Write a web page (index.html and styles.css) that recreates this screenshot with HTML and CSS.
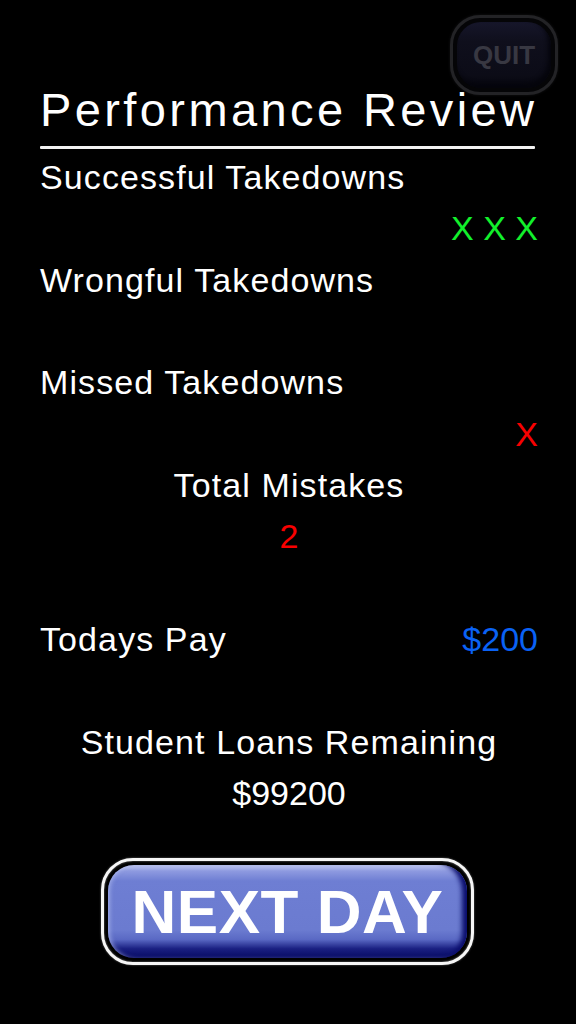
FILE: index.html
```html
<!DOCTYPE html>
<html lang="en">
<head>
<meta charset="utf-8">
<title>Performance Review</title>
<link rel="stylesheet" href="styles.css">
</head>
<body>
<div class="screen">
  <div class="quit-btn"><div class="quit-face">QUIT</div></div>
  <h1 class="title">Performance Review</h1>
  <div class="rule"></div>
  <div class="stats">
    <div class="row">Successful Takedowns</div>
    <div class="row right num green">X X X</div>
    <div class="row">Wrongful Takedowns</div>
    <div class="row right"></div>
    <div class="row">Missed Takedowns</div>
    <div class="row right num red">X</div>
    <div class="row center">Total Mistakes</div>
    <div class="row center num red">2</div>
    <div class="row"></div>
    <div class="row split"><span>Todays Pay</span><span class="num blue">$200</span></div>
    <div class="row"></div>
    <div class="row center">Student Loans Remaining</div>
    <div class="row center num">$99200</div>
  </div>
  <div class="next-wrap">
    <div class="next-btn"><div class="next-face">NEXT DAY</div></div>
  </div>
</div>
</body>
</html>
```
FILE: styles.css
```css
html, body {
  margin: 0;
  padding: 0;
  background: #000;
}
body {
  font-family: "Liberation Sans", Arial, Helvetica, sans-serif;
  color: #fff;
}
.screen {
  position: relative;
  width: 576px;
  height: 1024px;
  box-sizing: border-box;
  padding: 85px 38px 0 40px;
}
.quit-btn {
  position: absolute;
  top: 15px;
  left: 450px;
  width: 108px;
  height: 80px;
  box-sizing: border-box;
  border: 3px solid #232326;
  border-radius: 30px;
  padding: 4px;
  background: #050507;
  box-shadow: 0 0 3px #141416;
}
.quit-face {
  height: 100%;
  border-radius: 24px;
  background: linear-gradient(#16162a 0, #0f0f1c 30%, #0c0c17 80%, #06060e 100%);
  box-shadow: inset -3px -4px 4px #05050c;
  display: flex;
  align-items: center;
  justify-content: center;
  color: #383842;
  font-size: 26px;
  font-weight: bold;
}
.title {
  margin: 0;
  font-size: 47px;
  font-weight: normal;
  line-height: 50px;
  letter-spacing: 3.4px;
}
.rule {
  margin-top: 11px;
  width: 495px;
  height: 3px;
  background: #f2f2f2;
  border-radius: 1px;
}
.stats {
  margin-top: 3px;
  font-size: 34px;
  letter-spacing: 1.1px;
}
.row {
  height: 51.35px;
  line-height: 51.35px;
  white-space: nowrap;
}
.num { letter-spacing: 0; }
.right { text-align: right; }
.center { text-align: center; }
.split {
  display: flex;
  justify-content: space-between;
}
.green { color: #12f02c; }
.red { color: #f80000; }
.blue { color: #0a62f5; }
.next-wrap {
  margin-top: 39px;
  display: flex;
  justify-content: center;
}
.next-btn {
  margin-right: 3px;
  width: 373px;
  height: 107px;
  box-sizing: border-box;
  border: 3px solid #f6f6f6;
  border-radius: 32px;
  padding: 4px;
  background: #000;
  box-shadow: 0 0 2px #777, inset 0 0 2px #888;
}
.next-face {
  height: 100%;
  border-radius: 26px;
  background: linear-gradient(#c4ccf4 0, #8e9ae0 6px, #6e7ed3 16px, #6b7bd0 70%, #5a69c4 80%, #1a2082 90%, #070a62 100%);
  box-shadow: inset -8px 0 5px -3px #0a0d6c, inset 3px 0 4px -1px rgba(200, 210, 250, 0.5);
  display: flex;
  align-items: center;
  justify-content: center;
  color: #fff;
  font-size: 62px;
  font-weight: bold;
  letter-spacing: 0.5px;
}
```
